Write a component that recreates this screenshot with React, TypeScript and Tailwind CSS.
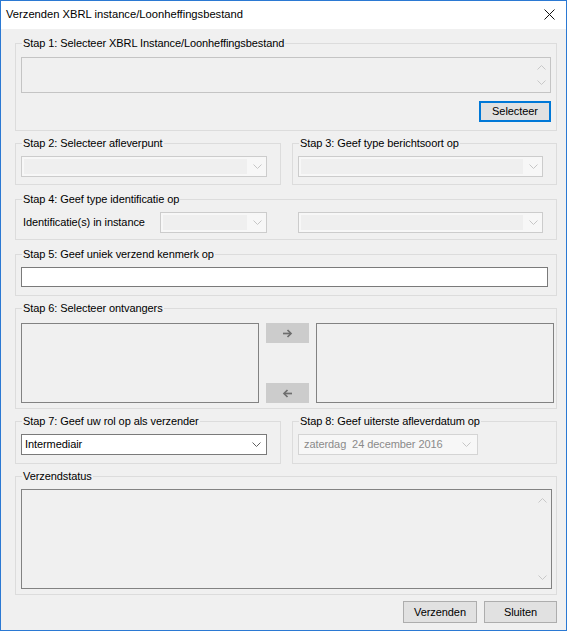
import React from "react";

function Chevron({ color, up = false }: { color: string; up?: boolean }) {
  return (
    <svg width="9" height="5" viewBox="0 0 9 5">
      <path d={up ? "M0.5 4.5 L4.5 0.5 L8.5 4.5" : "M0.5 0.5 L4.5 4.5 L8.5 0.5"} fill="none" stroke={color} strokeWidth="1" />
    </svg>
  );
}

function Arrow({ left = false }: { left?: boolean }) {
  return (
    <svg width="11" height="9" viewBox="0 0 11 9">
      <g transform={left ? "translate(11 0) scale(-1 1)" : undefined} fill="none" stroke="#6e6e6e" strokeWidth="1.7">
        <path d="M1 4.5 H9" />
        <path d="M5.5 1 L9 4.5 L5.5 8" />
      </g>
    </svg>
  );
}

function Group({ title, className = "", children }: { title: string; className?: string; children: React.ReactNode }) {
  return (
    <fieldset className={`border border-[#dcdcdc] ${className}`}>
      <legend className="ml-[6px] px-[1px] leading-[13px]">{title}</legend>
      {children}
    </fieldset>
  );
}

function DisabledCombo({ w }: { w: string }) {
  return (
    <div className={`flex h-[21px] ${w} border border-[#cccccc] bg-[#f7f7f7]`}>
      <div className="m-[2px] flex-1 bg-[#efefef]" />
      <div className="flex w-[17px] items-center justify-center">
        <Chevron color="#c6c6c6" />
      </div>
    </div>
  );
}

function ScrollArrows({ top, bottom }: { top: string; bottom: string }) {
  return (
    <div className={`flex w-[17px] flex-col items-center justify-between ${top} ${bottom}`}>
      <Chevron color="#c8c8c8" up />
      <Chevron color="#c8c8c8" />
    </div>
  );
}

export default function App() {
  return (
    <div className="flex h-[631px] w-[567px] flex-col overflow-hidden border border-[#2b79d3] bg-[#f0f0f0] font-['Liberation_Sans',Arial,sans-serif] text-[11px] tracking-[-0.08px] text-black">
      {/* title bar */}
      <div className="flex h-[28px] shrink-0 items-center justify-between bg-white pb-[2px] pl-[5px] pr-[11px]">
        <span className="text-[11.2px] tracking-normal">Verzenden XBRL instance/Loonheffingsbestand</span>
        <svg width="11" height="11" viewBox="0 0 11 11">
          <path d="M0.5 0.5 L10.5 10.5 M10.5 0.5 L0.5 10.5" stroke="#111" strokeWidth="1" />
        </svg>
      </div>

      <div className="flex flex-col pl-[14px] pr-[9px] pt-[8px]">
        {/* stap 1 */}
        <Group title="Stap 1: Selecteer XBRL Instance/Loonheffingsbestand">
          <div className="pb-[8px] pl-[5px] pr-[5px]">
            <div className="mt-[7px] flex h-[36px] justify-end border border-[#c4c4c4] bg-[#f0f0f0]">
              <ScrollArrows top="pt-[7px]" bottom="pb-[7px]" />
            </div>
            <div className="mt-[8px] flex justify-end">
              <button className="h-[21px] w-[72px] border-2 border-[#0078d7] bg-[#e1e1e1] text-[11px]">Selecteer</button>
            </div>
          </div>
        </Group>

        {/* stap 2 + 3 */}
        <div className="mt-[6px] flex gap-[11px]">
          <Group title="Stap 2: Selecteer afleverpunt" className="w-[266px]">
            <div className="pb-[7px] pl-[5px] pt-[6px]">
              <DisabledCombo w="w-[246px]" />
            </div>
          </Group>
          <Group title="Stap 3: Geef type berichtsoort op" className="flex-1">
            <div className="pb-[7px] pl-[5px] pt-[6px]">
              <DisabledCombo w="w-[245px]" />
            </div>
          </Group>
        </div>

        {/* stap 4 */}
        <Group title="Stap 4: Geef type identificatie op" className="mt-[8px]">
          <div className="flex items-center pb-[6px] pl-[5px] pt-[6px]">
            <span className="w-[139px] pl-[2px]">Identificatie(s) in instance</span>
            <DisabledCombo w="w-[107px]" />
            <div className="ml-[31px]">
              <DisabledCombo w="w-[245px]" />
            </div>
          </div>
        </Group>

        {/* stap 5 */}
        <Group title="Stap 5: Geef uniek verzend kenmerk op" className="mt-[8px]">
          <div className="pb-[8px] pl-[5px] pt-[6px]">
            <div className="h-[20px] w-[527px] border border-[#7a7a7a] bg-white" />
          </div>
        </Group>

        {/* stap 6 */}
        <Group title="Stap 6: Selecteer ontvangers" className="mt-[6px]">
          <div className="flex gap-[7px] pb-[5px] pl-[5px] pt-[8px]">
            <div className="h-[80px] w-[238px] border border-[#828282] bg-[#f0f0f0]" />
            <div className="flex h-[80px] w-[43px] flex-col justify-between">
              <div className="flex h-[20px] items-center justify-center bg-[#cccccc]">
                <Arrow />
              </div>
              <div className="flex h-[20px] items-center justify-center bg-[#cccccc]">
                <Arrow left />
              </div>
            </div>
            <div className="h-[80px] w-[238px] border border-[#828282] bg-[#f0f0f0]" />
          </div>
        </Group>

        {/* stap 7 + 8 */}
        <div className="mt-[6px] flex gap-[11px]">
          <Group title="Stap 7: Geef uw rol op als verzender" className="w-[266px]">
            <div className="pb-[8px] pl-[5px] pt-[6px]">
              <div className="flex h-[21px] w-[246px] items-center justify-between border border-[#7a7a7a] bg-white pl-[3px] pr-[5px]">
                <span>Intermediair</span>
                <Chevron color="#606060" />
              </div>
            </div>
          </Group>
          <Group title="Stap 8: Geef uiterste afleverdatum op" className="flex-1">
            <div className="pb-[8px] pl-[5px] pt-[6px]">
              <div className="flex h-[21px] w-[180px] items-center justify-between border border-[#d4d4d4] bg-[#f7f7f7] pl-[5px] pr-[6px] text-[#8a8a8a]">
                <span className="whitespace-pre">zaterdag  24 december 2016</span>
                <Chevron color="#c6c6c6" />
              </div>
            </div>
          </Group>
        </div>

        {/* verzendstatus */}
        <Group title="Verzendstatus" className="mt-[6px]">
          <div className="pb-[5px] pl-[5px] pt-[6px]">
            <div className="flex h-[100px] w-[531px] justify-end border border-[#828282] bg-[#f0f0f0]">
              <ScrollArrows top="pt-[8px]" bottom="pb-[8px]" />
            </div>
          </div>
        </Group>

        {/* buttons */}
        <div className="mt-[6px] flex justify-end gap-[7px]">
          <button className="h-[22px] w-[74px] border border-[#adadad] bg-[#e1e1e1] text-[11px]">Verzenden</button>
          <button className="h-[22px] w-[73px] border border-[#adadad] bg-[#e1e1e1] text-[11px]">Sluiten</button>
        </div>
      </div>
    </div>
  );
}
